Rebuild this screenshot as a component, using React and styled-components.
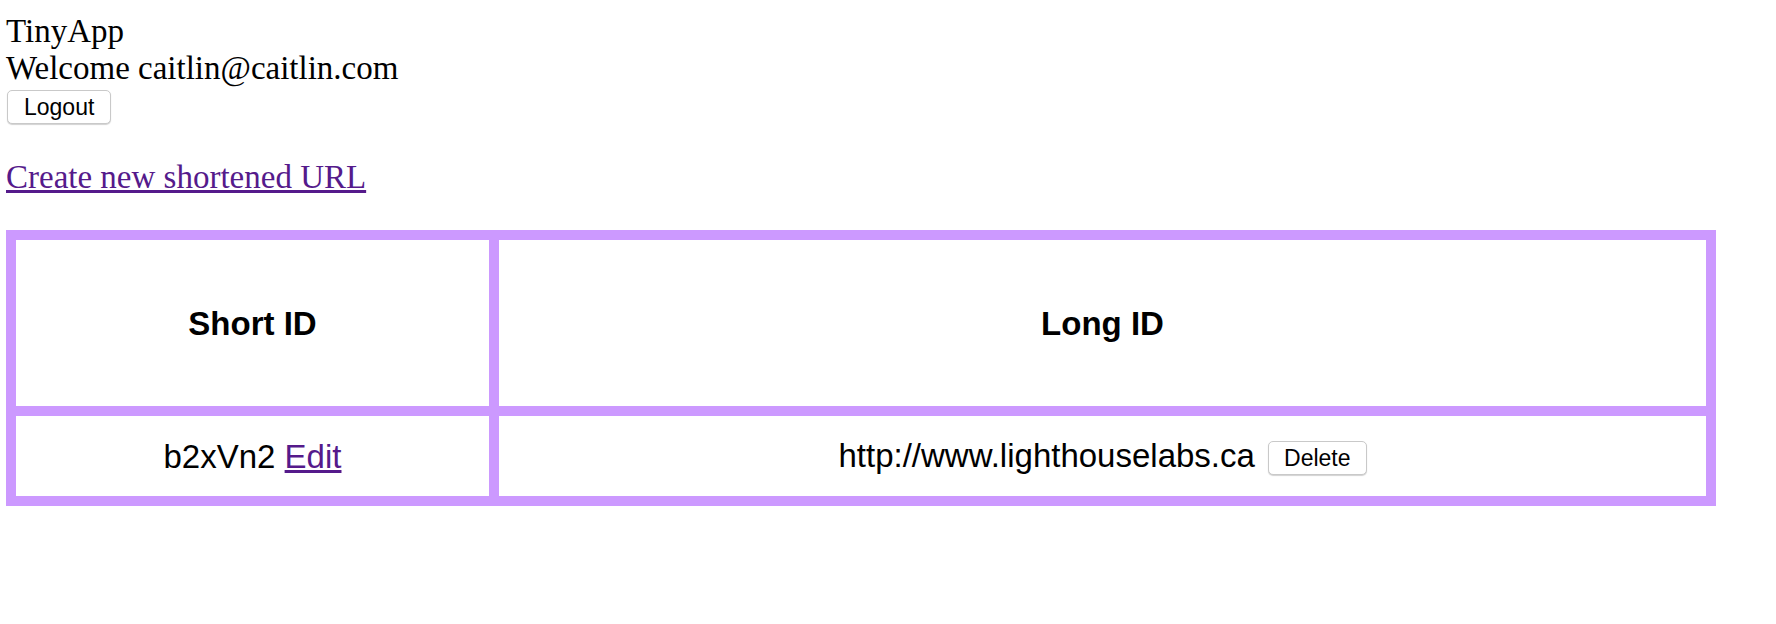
import React from "react";
import styled, { createGlobalStyle } from "styled-components";

const GlobalStyle = createGlobalStyle`
  *, *::before, *::after { box-sizing: border-box; }
  html, body { margin: 0; padding: 0; background: #ffffff; }
  body {
    font-family: "Liberation Serif", "Times New Roman", serif;
    font-size: 33px;
    color: #000000;
  }
`;

const Page = styled.div`
  padding: 13px 0 0 6px;
  display: flex;
  flex-direction: column;
  align-items: flex-start;
`;

const Header = styled.header`
  display: flex;
  flex-direction: column;
  align-items: flex-start;
`;

const Line = styled.div`
  font-family: "Liberation Serif", "Times New Roman", serif;
  font-size: 33px;
  line-height: 37px;
  height: 37px;
  white-space: nowrap;
`;

const Button = styled.button`
  font-family: "Liberation Sans", Arial, sans-serif;
  font-size: 23px;
  line-height: 1;
  color: #000000;
  height: 34px;
  padding: 0 ${(p) => p.$padX || 16}px;
  margin: ${(p) => p.$margin || "0"};
  background: #ffffff;
  border: 1px solid #c9c9c9;
  border-radius: 5px;
  box-shadow: 0 1px 1px rgba(0, 0, 0, 0.18);
  vertical-align: middle;
  cursor: pointer;
`;

const LogoutForm = styled.form`
  display: flex;
  margin: 3px 0 0 1px;
`;

const CreateLink = styled.a`
  display: block;
  margin-top: 35px;
  font-family: "Liberation Serif", "Times New Roman", serif;
  font-size: 33px;
  line-height: 37px;
  color: #551a8b;
  text-decoration: underline;
  white-space: nowrap;
`;

const Table = styled.table`
  margin-top: 34px;
  width: 1710px;
  table-layout: fixed;
  border-collapse: separate;
  border-spacing: 0;
  border-top: 10px solid #cc99ff;
  border-left: 10px solid #cc99ff;
  font-family: "Liberation Sans", Arial, sans-serif;
  font-size: 33px;
`;

const Th = styled.th`
  width: ${(p) => (p.$w ? `${p.$w}px` : "auto")};
  height: 176px;
  padding: 0;
  border-right: 10px solid #cc99ff;
  border-bottom: 10px solid #cc99ff;
  font-weight: bold;
  text-align: center;
  vertical-align: middle;
  line-height: 37px;
`;

const Td = styled.td`
  height: 90px;
  padding: 0;
  border-right: 10px solid #cc99ff;
  border-bottom: 10px solid #cc99ff;
  text-align: center;
  vertical-align: middle;
  line-height: 37px;
  white-space: nowrap;
`;

const CellLink = styled.a`
  color: #551a8b;
  text-decoration: underline;
`;

const InlineForm = styled.form`
  display: inline;
  margin: 0;
`;

const urls = [{ id: "b2xVn2", long: "http://www.lighthouselabs.ca" }];

export default function App() {
  return (
    <>
      <GlobalStyle />
      <Page>
        <Header>
          <Line>TinyApp</Line>
          <Line>Welcome caitlin@caitlin.com</Line>
          <LogoutForm onSubmit={(e) => e.preventDefault()}>
            <Button type="submit" $padX={16}>Logout</Button>
          </LogoutForm>
        </Header>
        <CreateLink href="#">Create new shortened URL</CreateLink>
        <Table>
          <thead>
            <tr>
              <Th $w={483}>Short ID</Th>
              <Th>Long ID</Th>
            </tr>
          </thead>
          <tbody>
            {urls.map((u) => (
              <tr key={u.id}>
                <Td>
                  {u.id} <CellLink href="#">Edit</CellLink>
                </Td>
                <Td>
                  {u.long}{" "}
                  <InlineForm onSubmit={(e) => e.preventDefault()}>
                    <Button type="submit" $padX={15} $margin="0 0 0 4px">
                      Delete
                    </Button>
                  </InlineForm>
                </Td>
              </tr>
            ))}
          </tbody>
        </Table>
      </Page>
    </>
  );
}
